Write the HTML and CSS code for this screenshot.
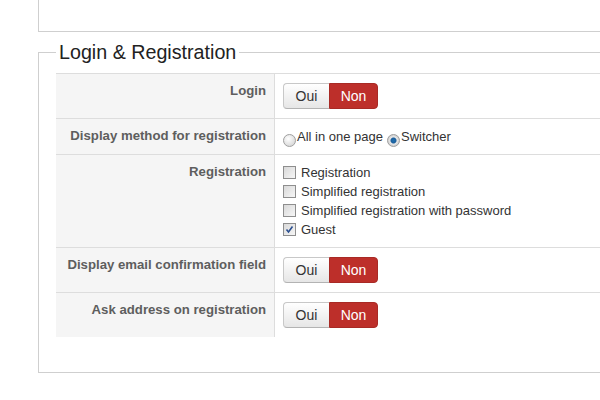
FILE: index.html
```html
<!DOCTYPE html>
<html>
<head>
<meta charset="utf-8">
<link rel="stylesheet" href="styles.css">
</head>
<body>
<div class="page">
  <div class="topbox"></div>
  <fieldset class="group">
    <legend class="group-title">Login &amp; Registration</legend>
    <table class="opts">
      <tr>
        <td class="lbl">Login</td>
        <td class="ctl">
          <div class="toggle"><span class="tbtn off">Oui</span><span class="tbtn on">Non</span></div>
        </td>
      </tr>
      <tr>
        <td class="lbl">Display method for registration</td>
        <td class="ctl">
          <div class="radios">
            <span class="radio"></span><span class="rtxt">All in one page</span>
            <span class="radio checked"></span><span class="rtxt">Switcher</span>
          </div>
        </td>
      </tr>
      <tr>
        <td class="lbl">Registration</td>
        <td class="ctl">
          <div class="checks">
            <div class="check"><span class="box"></span><span>Registration</span></div>
            <div class="check"><span class="box"></span><span>Simplified registration</span></div>
            <div class="check"><span class="box"></span><span>Simplified registration with password</span></div>
            <div class="check"><span class="box checked"><svg viewBox="0 0 13 13" width="13" height="13"><path d="M3.5 6.5 L5.5 9 L9.5 3.5" fill="none" stroke="#2b4f8f" stroke-width="1.6"/></svg></span><span>Guest</span></div>
          </div>
        </td>
      </tr>
      <tr>
        <td class="lbl">Display email confirmation field</td>
        <td class="ctl">
          <div class="toggle"><span class="tbtn off">Oui</span><span class="tbtn on">Non</span></div>
        </td>
      </tr>
      <tr>
        <td class="lbl">Ask address on registration</td>
        <td class="ctl">
          <div class="toggle"><span class="tbtn off">Oui</span><span class="tbtn on">Non</span></div>
        </td>
      </tr>
    </table>
  </fieldset>
</div>
</body>
</html>
```

FILE: styles.css
```css
html, body {
  margin: 0;
  padding: 0;
  overflow: hidden;
  background: #fff;
  font-family: "Liberation Sans", Arial, sans-serif;
  font-size: 13px;
  color: #333;
}
.page {
  padding-left: 38px;
  width: 700px;
}
.topbox {
  height: 31px;
  border-left: 1px solid #cfcfcf;
  border-bottom: 1px solid #cfcfcf;
}
.group {
  margin: 8px 0 0 0;
  padding: 0 0 35px 17px;
  border: 1px solid #cfcfcf;
  min-width: 0;
}
.group-title {
  padding: 0 3px;
  font-size: 19.7px;
  line-height: 24px;
  color: #222;
}
.opts {
  margin-top: 9px;
  border-collapse: collapse;
  width: 660px;
}
.opts td {
  padding: 8px;
  vertical-align: top;
  line-height: 18px;
}
.opts tr + tr td {
  border-top: 1px solid #dddddd;
}
.opts tr:first-child td {
  border-top: 1px solid #dddddd;
}
.lbl {
  width: 202px;
  background: #f5f5f5;
  border-right: 1px solid #dddddd;
  text-align: right;
  font-weight: bold;
  font-size: 13.2px;
  color: #5e5e5e;
}
.toggle {
  display: flex;
  height: 26px;
  margin: 1px 0;
  width: 95px;
}
.tbtn {
  display: flex;
  align-items: center;
  justify-content: center;
  font-size: 14px;
  box-sizing: border-box;
}
.tbtn.off {
  width: 46px;
  background: linear-gradient(#ffffff, #e6e6e6);
  border: 1px solid #c8c8c8;
  border-bottom-color: #b3b3b3;
  border-right: none;
  border-radius: 4px 0 0 4px;
  color: #333;
}
.tbtn.on {
  width: 49px;
  background: #bd2f2a;
  border: 1px solid #a82a25;
  border-radius: 0 4px 4px 0;
  color: #fff;
}
.radios {
  display: flex;
  align-items: flex-end;
  line-height: 19px;
  height: 19px;
}
.radio {
  width: 11px;
  height: 11px;
  border: 1px solid #a0a0a0;
  border-radius: 50%;
  background: radial-gradient(circle at 40% 35%, #ffffff, #dcdcdc 70%);
  margin-bottom: -1px;
  position: relative;
}
.radio.checked {
  background: radial-gradient(circle at 50% 50%, #1d6fb0 0, #1d5f9c 2.5px, #e8e8e8 3.5px, #d0d0d0 70%);
  margin-left: 4px;
}
.rtxt {
  margin-left: 1px;
}
.checks {
  display: flex;
  flex-direction: column;
}
.check {
  display: flex;
  align-items: flex-start;
  line-height: 19px;
  height: 19px;
}
.check .box {
  width: 11px;
  height: 11px;
  border: 1px solid #8e8e8e;
  background: linear-gradient(135deg, #d9d9d9, #f6f6f6);
  margin-top: 3px;
  margin-right: 5px;
  position: relative;
  flex: none;
}
.check .box svg {
  position: absolute;
  left: -1px;
  top: -1px;
}
```
